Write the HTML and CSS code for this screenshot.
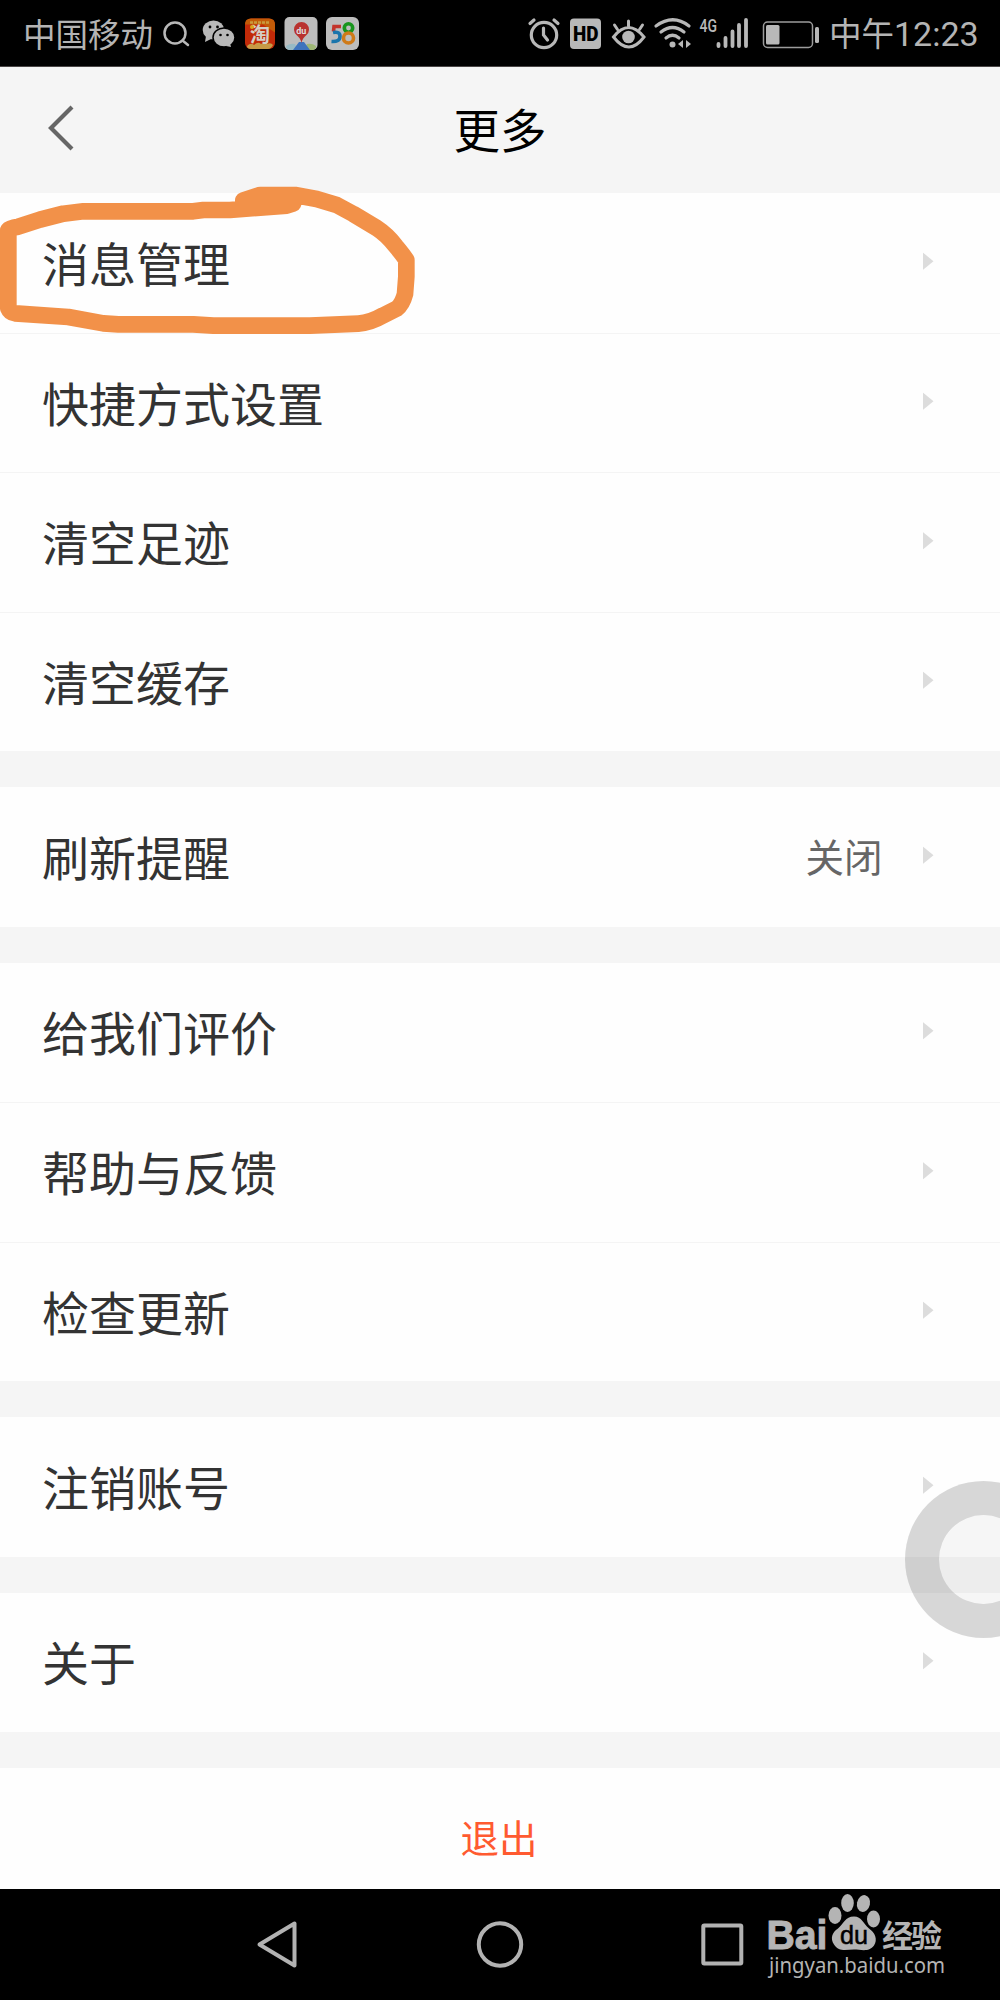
FILE: index.html
```html
<!DOCTYPE html>
<html lang="zh-CN">
<head>
<meta charset="utf-8">
<title>更多</title>
<link rel="stylesheet" href="styles.css">
</head>
<body>
<div class="phone">
  <div class="status">
    <span class="carrier">中国移动</span>
    <svg class="glyph" width="36" height="67" viewBox="160 0 36 67"><g fill="none" stroke="#b8b8b8" stroke-width="2.5" stroke-linecap="round"><circle cx="175" cy="33" r="10.5"/><path d="M182.500 40.500L188 45"/></g></svg>
    <svg class="glyph" width="44" height="67" viewBox="196 0 44 67"><g fill="#b8b8b8"><ellipse cx="213.500" cy="30" rx="10.800" ry="9.500"/><path d="M206 36l-1 6 6-3z"/><ellipse cx="224" cy="37.500" rx="11" ry="9.500" stroke="#000" stroke-width="1.500"/><path d="M226 46l5 1-1-4z"/></g><g fill="#000"><circle cx="210" cy="27" r="1.400"/><circle cx="217.500" cy="27" r="1.400"/><circle cx="220.500" cy="35" r="1.300"/><circle cx="227.500" cy="35" r="1.300"/></g></svg>
    <svg class="glyph" width="40" height="67" viewBox="240 0 40 67"><rect x="245" y="18.500" width="30" height="30.500" rx="6" fill="#c22a08"/><path d="M251 18.500h18q6 0 6 6v8l-12-8h-18q0-6 6-6z" fill="#c25b08"/><path d="M250 22.500h20" stroke="#c99a3c" stroke-width="2.500" stroke-dasharray="3 1"/><path d="M247 46q4-4 7-1 4-4 7-1 4-3 6 0 4-2 6 1-2 4-5 4h-17q-4 0-4-3z" fill="#c79a45"/><text class="cjk heavy" x="250" y="41.500" font-size="20" fill="#d4cfc6">淘</text><circle cx="252" cy="27" r="2" fill="#d7a71d"/></svg>
    <svg class="glyph" width="42" height="67" viewBox="280 0 42 67"><rect x="284.500" y="17" width="33" height="33" rx="5" fill="#bdbdbd"/><path d="M286 46q4-3 9-2l3 6h-8q-4 0-4-4z" fill="#98bac5"/><path d="M316 46q-4-3-9-2l-3 6h8q4 0 4-4z" fill="#9fb776"/><path d="M299 42h5l6 8h-17z" fill="#3e73bd"/><path d="M301.500 43q-1-5-5-8a7.500 7.500 0 1 1 10 0q-4 3-5 8z" fill="#b9322e"/><text class="roboto" x="296.300" y="34" font-size="9" font-weight="700" fill="#ddd">du</text></svg>
    <svg class="glyph" width="42" height="67" viewBox="322 0 42 67"><rect x="326" y="17" width="33" height="33" rx="6" fill="#bdbdbd"/><g fill="none" stroke-width="3.600"><path d="M341 26.500h-7l-.5 5" stroke="#c3352c"/><path d="M333 32.500q7-1.500 7 4 0 5.500-8.500 5" stroke="#1a75ac"/><circle cx="348.500" cy="28" r="4.200" stroke="#18951c"/><circle cx="348.500" cy="38" r="5" stroke="#cf7a18"/></g></svg>
    <span class="spacer"></span>
    <svg class="glyph" width="40" height="67" viewBox="525 0 40 67"><g fill="none" stroke="#b8b8b8" stroke-width="3.200" stroke-linecap="round"><circle cx="544" cy="35" r="12.700"/><path d="M543.500 28v7l4 5M530 23.500l4-3.500M558 23.500l-4-3.500"/></g></svg>
    <svg class="glyph" width="42" height="67" viewBox="565 0 42 67"><rect x="570" y="18.500" width="31" height="30.500" rx="4" fill="#b8b8b8"/><text class="roboto" x="573" y="41" font-size="20" font-weight="900" textLength="25.500" lengthAdjust="spacingAndGlyphs" fill="#000">HD</text></svg>
    <svg class="glyph" width="42" height="67" viewBox="607 0 42 67"><g fill="none" stroke="#b8b8b8" stroke-width="3" stroke-linecap="round"><path d="M613.500 37q15-19 30.500 0-15 20-30.500 0zM628.500 21v5M614.500 25l3 4.500M642.500 25l-3 4.500"/></g><circle cx="628.500" cy="37" r="6.300" fill="#b8b8b8"/></svg>
    <svg class="glyph" width="46" height="67" viewBox="649 0 46 67"><g fill="none" stroke="#b8b8b8" stroke-width="3.200" stroke-linecap="round"><path d="M656 26q17-12.500 33 0M661 32q11.500-9 23 0M666 38q6.500-5.500 13 0"/></g><circle cx="672.500" cy="44.500" r="3" fill="#b8b8b8"/><path d="M678 44l5-4v8zM686 40v8l5-4z" fill="#b8b8b8"/></svg>
    <svg class="glyph" width="60" height="67" viewBox="695 0 60 67"><text class="roboto" x="699.500" y="31.500" font-size="18" font-weight="500" textLength="17.500" lengthAdjust="spacingAndGlyphs" fill="#b8b8b8">4G</text><path d="M718.500 44v2M725.500 38v8M732.500 31.500v14.500M739 25v21M746 20v26" stroke="#b8b8b8" stroke-width="3.800" stroke-linecap="round"/></svg>
    <svg class="glyph" width="70" height="67" viewBox="755 0 70 67"><rect x="763.500" y="22" width="49" height="25.500" rx="4" fill="none" stroke="#9c9c9c" stroke-width="1.500"/><rect x="766" y="25" width="13.500" height="19.500" rx="1.500" fill="#b8b8b8"/><rect x="815" y="27" width="4" height="16" rx="1.500" fill="#b8b8b8"/></svg>
    <span class="clock">中午<span class="digits">12:23</span></span>
  </div>

  <header class="header">
    <svg class="back" width="30" height="48" viewBox="46 104 30 48"><path d="M72 107L51 128l21 21" fill="none" stroke="#666" stroke-width="4.200"/></svg>
    <h1 class="title">更多</h1>
  </header>

  <main class="list">
    <section class="group">
      <div class="row"><span>消息管理</span><i class="arrow"></i></div>
      <div class="row"><span>快捷方式设置</span><i class="arrow"></i></div>
      <div class="row"><span>清空足迹</span><i class="arrow"></i></div>
      <div class="row"><span>清空缓存</span><i class="arrow"></i></div>
    </section>
    <section class="group">
      <div class="row"><span class="label">刷新提醒</span><span class="value">关闭</span><i class="arrow"></i></div>
    </section>
    <section class="group">
      <div class="row"><span>给我们评价</span><i class="arrow"></i></div>
      <div class="row"><span>帮助与反馈</span><i class="arrow"></i></div>
      <div class="row"><span>检查更新</span><i class="arrow"></i></div>
    </section>
    <section class="group">
      <div class="row"><span>注销账号</span><i class="arrow"></i></div>
    </section>
    <section class="group">
      <div class="row"><span>关于</span><i class="arrow"></i></div>
    </section>
    <section class="group">
      <div class="row exit">退出</div>
    </section>
  </main>

  <nav class="nav">
    <svg width="1000" height="111" viewBox="0 1889 1000 111">
      <g fill="none" stroke="#b2b2b2" stroke-width="4" stroke-linejoin="round"><path d="M259.500 1944.500L294.500 1923.500V1965.500z"/><circle cx="500" cy="1944.500" r="21.200"/><rect x="703.300" y="1925.500" width="38" height="38" rx="1"/></g>
      <g fill="#b4b4b4">
        <text class="arial" x="766.500" y="1949" font-size="41" font-weight="700" stroke="#b4b4b4" textLength="61" lengthAdjust="spacingAndGlyphs">Bai</text>
        <ellipse cx="835" cy="1915.500" rx="6.500" ry="8.500"/><ellipse cx="847.500" cy="1903" rx="6.300" ry="9"/><ellipse cx="863.500" cy="1903.500" rx="6.500" ry="8.500" transform="rotate(12 863.500 1903.500)"/><ellipse cx="873.500" cy="1919" rx="6.500" ry="8.500"/>
        <path d="M854 1916.500c-9 0-10 7-16 12-6 4-8 10-4 16 5 8 13 5 20 5s15 3 20-4c4-6 1-13-5-17-6-5-7-12-15-12z"/>
        <text class="arial" x="840" y="1944" font-size="25" fill="#000" stroke="#000" stroke-width=".5" textLength="28" lengthAdjust="spacingAndGlyphs">du</text>
        <text class="cjk" x="882" y="1946.500" font-size="31" font-weight="700" textLength="60">经验</text>
        <text class="noto" x="769" y="1972.500" font-size="22" textLength="176" lengthAdjust="spacingAndGlyphs">jingyan.baidu.com</text>
      </g>
    </svg>
  </nav>

  <svg class="marker" width="430" height="170" viewBox="0 0 1290 510"><path d="M730 91L780 75H885L950 87L1010 105L1060 132L1130 174Q1162 195 1187 228Q1212 258 1219 270V320L1215 372Q1207 403 1190 416L1150 436Q1110 459 1075 461L930 467H640L580 463H355L310 460L205 441L45 430Q30 428 25 415V180Q30 173 55 170L120 149L190 131L250 124H580L610 120H690L860 107L879 101" fill="none" stroke="#f29149" stroke-width="50" stroke-linecap="round" stroke-linejoin="round"/></svg>
  <div class="assist"></div>
</div>
</body>
</html>
```
FILE: styles.css
```css
body {
  margin: 0;
}

.phone {
  position: relative;
  display: flex;
  flex-direction: column;
  width: 1000px;
  height: 2000px;
  overflow: hidden;
  background: #f5f5f5;
  font-family: "Noto Sans CJK SC", sans-serif;
}

.status {
  box-sizing: border-box;
  display: flex;
  align-items: center;
  flex: none;
  height: 67px;
  padding: 0 22px 0 23px;
  background: #000;
  border-bottom: 1px solid #4a4646;
  color: #b4b4b4;
  font-size: 32.5px;
  line-height: 66px;
}

.glyph {
  flex: none;
}

.carrier {
  width: 137px;
  white-space: nowrap;
}

.spacer {
  flex: 1;
}

.clock {
  width: 149px;
  margin-left: 4px;
  white-space: nowrap;
}

.digits {
  font-family: Roboto, sans-serif;
  font-size: 34px;
}

.cjk {
  font-family: "Noto Sans CJK SC", sans-serif;
}

.heavy {
  font-weight: 700;
}

.roboto {
  font-family: Roboto, sans-serif;
}

.arial {
  font-family: "Liberation Sans", sans-serif;
}

.noto {
  font-family: "Noto Sans", sans-serif;
}

.header {
  display: grid;
  grid-template-columns: 1fr auto 1fr;
  align-items: center;
  flex: none;
  height: 126px;
}

.back {
  margin: 0 0 4px 46px;
}

.title {
  margin: 0;
  padding-bottom: 4px;
  color: #000;
  font-size: 46.5px;
  font-weight: 400;
  line-height: 122px;
}

.list {
  display: flex;
  flex-direction: column;
  gap: 36px;
  flex: 1;
  min-height: 0;
  overflow: hidden;
}

.group {
  flex: none;
  background: #fefefe;
}

.row {
  box-sizing: border-box;
  display: flex;
  align-items: center;
  justify-content: space-between;
  height: 139.5px;
  padding: 0 66.5px 3px 42px;
  color: #333;
  font-size: 47px;
  line-height: 1;
}

.row + .row {
  border-top: 1px solid #f4f4f4;
}

.label {
  flex: 1;
}

.value {
  margin-right: 40px;
  color: #666;
  font-size: 38.5px;
}

.arrow {
  width: 11px;
  height: 18px;
  background: #dcdcdc;
  clip-path: polygon(0 0, 100% 50%, 0 100%);
}

.exit {
  justify-content: center;
  padding: 0 2px 3px 0;
  color: #ff5a30;
  font-size: 38.5px;
}

.nav {
  display: flex;
  flex: none;
  height: 111px;
  background: #000;
}

.marker {
  position: absolute;
  top: 170px;
  left: 0;
}

.assist {
  position: absolute;
  top: 1481px;
  left: 905px;
  box-sizing: border-box;
  width: 157px;
  height: 157px;
  border: 34px solid rgba(0, 0, 0, .125);
  border-radius: 50%;
  background: rgba(0, 0, 0, .03);
}
```
